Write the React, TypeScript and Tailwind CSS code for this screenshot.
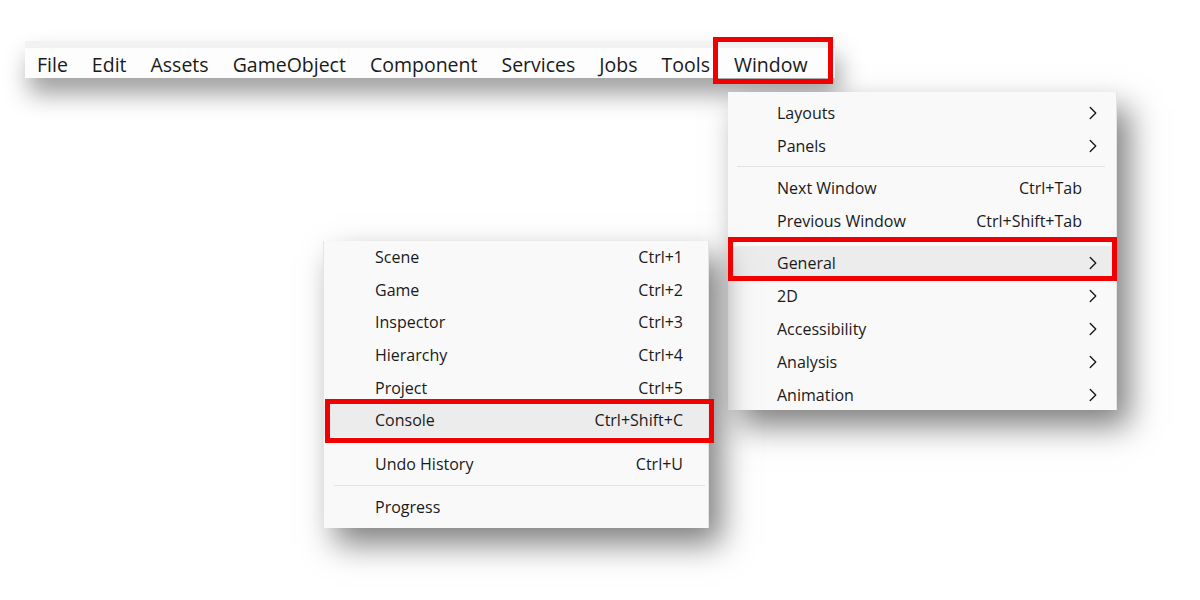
import React from "react";
import { ChevronRight } from "lucide-react";

type Item =
  | { kind: "sep" }
  | { kind: "item"; label: string; shortcut?: string; sub?: boolean; active?: boolean };

const menuBar = ["File", "Edit", "Assets", "GameObject", "Component", "Services", "Jobs", "Tools", "Window"];

const windowMenu: Item[] = [
  { kind: "item", label: "Layouts", sub: true },
  { kind: "item", label: "Panels", sub: true },
  { kind: "sep" },
  { kind: "item", label: "Next Window", shortcut: "Ctrl+Tab" },
  { kind: "item", label: "Previous Window", shortcut: "Ctrl+Shift+Tab" },
  { kind: "sep" },
  { kind: "item", label: "General", sub: true, active: true },
  { kind: "item", label: "2D", sub: true },
  { kind: "item", label: "Accessibility", sub: true },
  { kind: "item", label: "Analysis", sub: true },
  { kind: "item", label: "Animation", sub: true },
];

const generalMenu: Item[] = [
  { kind: "item", label: "Scene", shortcut: "Ctrl+1" },
  { kind: "item", label: "Game", shortcut: "Ctrl+2" },
  { kind: "item", label: "Inspector", shortcut: "Ctrl+3" },
  { kind: "item", label: "Hierarchy", shortcut: "Ctrl+4" },
  { kind: "item", label: "Project", shortcut: "Ctrl+5" },
  { kind: "item", label: "Console", shortcut: "Ctrl+Shift+C", active: true },
  { kind: "sep" },
  { kind: "item", label: "Undo History", shortcut: "Ctrl+U" },
  { kind: "sep" },
  { kind: "item", label: "Progress" },
  { kind: "sep" },
];

function WindowMenu() {
  return (
    <div className="absolute left-[728px] top-[92px] w-[389px] h-[318px] overflow-hidden bg-[#f9f9f9] border-r border-[#e4e4e4] pt-1 shadow-[12px_16px_30px_rgba(0,0,0,0.5)]">
      {windowMenu.map((it, i) =>
        it.kind === "sep" ? (
          <div key={i} className="my-1 ml-[9px] mr-[11px] h-px bg-[#e2e2e2]" />
        ) : (
          <div
            key={i}
            className={`flex h-[33px] items-center pl-[49px] pr-[12px] ${it.active ? "bg-[#ececec]" : ""}`}
          >
            <span className="flex-1">{it.label}</span>
            {it.shortcut && <span>{it.shortcut}</span>}
            <span className="flex w-[22px] justify-center">
              {it.sub && <ChevronRight size={22} strokeWidth={1.5} className="text-[#1a1a1a]" />}
            </span>
          </div>
        )
      )}
    </div>
  );
}

function GeneralMenu() {
  return (
    <div className="absolute left-[323px] top-[241px] w-[386px] h-[287px] overflow-hidden bg-[#f9f9f9] border-l border-r border-[#e4e4e4] shadow-[12px_16px_30px_rgba(0,0,0,0.5)]">
      {generalMenu.map((it, i) =>
        it.kind === "sep" ? (
          <div key={i} className="my-[5px] ml-[10px] mr-[3px] h-px bg-[#e2e2e2]" />
        ) : (
          <div
            key={i}
            className={`flex h-[32.6px] items-center pl-[51px] pr-[25px] ${it.active ? "bg-[#ececec]" : ""}`}
          >
            <span className="flex-1">{it.label}</span>
            {it.shortcut && <span>{it.shortcut}</span>}
          </div>
        )
      )}
    </div>
  );
}

export default function App() {
  return (
    <div className="relative w-[1200px] h-[600px] overflow-hidden bg-white font-['Open_Sans',sans-serif] text-[16px] text-[#1a1a1a]">
      {/* menu bar strip */}
      <div className="ml-[25px] mt-[41px] w-[810px] border-t-[7px] border-[#f2f2f2] bg-[#fdfdfd] shadow-[4px_16px_24px_rgba(0,0,0,0.38)]">
        <div className="flex h-[30px] items-center pt-[4px] text-[19.5px]">
          {menuBar.map((m) => (
            <span key={m} className="px-[12px] leading-none">
              {m}
            </span>
          ))}
        </div>
      </div>

      <WindowMenu />
      <GeneralMenu />

      {/* red callout frames */}
      <div className="absolute left-[713px] top-[37px] h-[47px] w-[120px] border-[5px] border-[#f00000]" />
      <div className="absolute left-[728px] top-[237px] h-[44px] w-[389px] border-[5px] border-[#f00000]" />
      <div className="absolute left-[325px] top-[399px] h-[44px] w-[389px] border-[5px] border-[#f00000]" />
    </div>
  );
}
